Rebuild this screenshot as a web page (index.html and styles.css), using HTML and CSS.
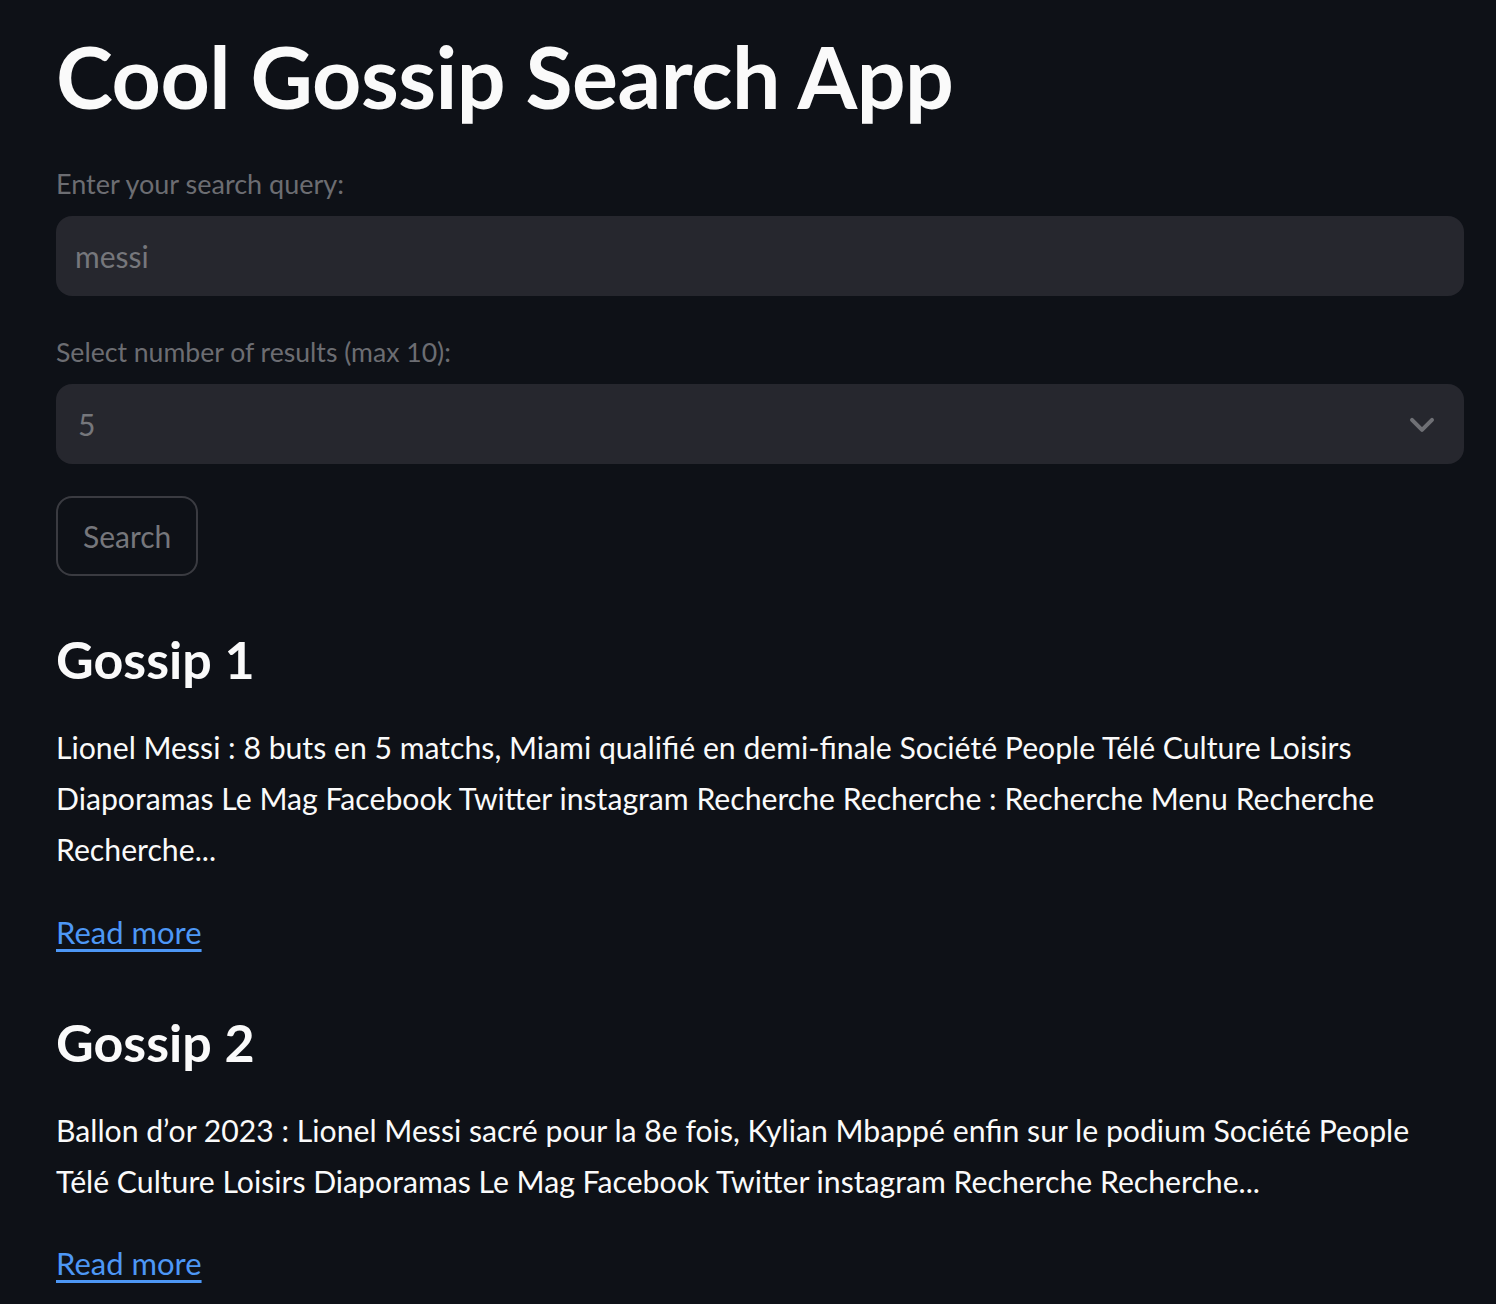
FILE: index.html
```
<!DOCTYPE html>
<html lang="en">
<head>
<meta charset="utf-8">
<title>Cool Gossip Search App</title>
<link rel="stylesheet" href="styles.css">
</head>
<body>
<main class="app">
  <h1 class="title">Cool Gossip Search App</h1>

  <label class="field-label">Enter your search query:</label>
  <div class="text-input">messi</div>

  <label class="field-label field-label--second">Select number of results (max 10):</label>
  <div class="select">
    <span class="select-value">5</span>
    <svg class="chevron" width="40" height="40" viewBox="0 0 24 24" aria-hidden="true">
      <path d="M6 9.5l6 6 6-6" fill="none" stroke="currentColor" stroke-width="2.4" stroke-linecap="round" stroke-linejoin="round"/>
    </svg>
  </div>

  <button class="btn">Search</button>

  <section class="result">
    <h3 class="result-title">Gossip 1</h3>
    <p class="result-text">Lionel Messi : 8 buts en 5 matchs, Miami qualifié en demi-finale Société People Télé Culture Loisirs Diaporamas Le Mag Facebook Twitter instagram Recherche Recherche : Recherche Menu Recherche Recherche...</p>
    <a class="result-link" href="#">Read more</a>
  </section>

  <section class="result result--next">
    <h3 class="result-title">Gossip 2</h3>
    <p class="result-text">Ballon d’or 2023 : Lionel Messi sacré pour la 8e fois, Kylian Mbappé enfin sur le podium Société People Télé Culture Loisirs Diaporamas Le Mag Facebook Twitter instagram Recherche Recherche...</p>
    <a class="result-link" href="#">Read more</a>
  </section>
</main>
</body>
</html>
```

FILE: styles.css
```
* { box-sizing: border-box; }

html, body {
  margin: 0;
  padding: 0;
  background: #0e1117;
  height: 100%;
  overflow: hidden;
}

body {
  font-family: Lato, "Noto Sans", sans-serif;
  color: #fafafa;
}

.app {
  padding: 23px 32px 0 56px;
  display: flex;
  flex-direction: column;
  align-items: flex-start;
}

.title {
  margin: 0;
  font-size: 86px;
  font-weight: 700;
  line-height: 106px;
  letter-spacing: -0.5px;
}

.field-label {
  display: block;
  margin-top: 32px;
  font-size: 27px;
  line-height: 45px;
  color: #6c6d72;
}

.field-label--second {
  margin-top: 34px;
  font-size: 26.6px;
}

.text-input,
.select {
  width: 100%;
  height: 80px;
  border-radius: 16px;
  background: #26272e;
  font-size: 30px;
  color: #76777c;
  display: flex;
  align-items: center;
}

.text-input {
  margin-top: 10px;
  padding-left: 19px;
}

.select {
  margin-top: 9px;
  padding: 0 22px 0 22px;
  justify-content: space-between;
}

.chevron {
  color: #6f7075;
  width: 40px;
  height: 40px;
}

.btn {
  margin-top: 32px;
  height: 80px;
  padding: 0 25px;
  border: 2px solid #3a3b41;
  border-radius: 16px;
  background: transparent;
  color: #76777c;
  font-family: Lato, "Noto Sans", sans-serif;
  font-size: 30px;
}

.result {
  margin-top: 50px;
  display: flex;
  flex-direction: column;
  align-items: flex-start;
}

.result--next {
  margin-top: 51px;
}

.result-title {
  margin: 0;
  font-size: 52px;
  font-weight: 700;
  line-height: 67px;
}

.result-text {
  margin: 29px 0 0;
  font-size: 30.2px;
  line-height: 51.2px;
}

.result-link {
  margin-top: 31px;
  font-size: 31px;
  line-height: 51.2px;
  color: #4d97f5;
  text-decoration: underline;
  text-decoration-thickness: 3px;
  text-underline-offset: 5px;
}
```
